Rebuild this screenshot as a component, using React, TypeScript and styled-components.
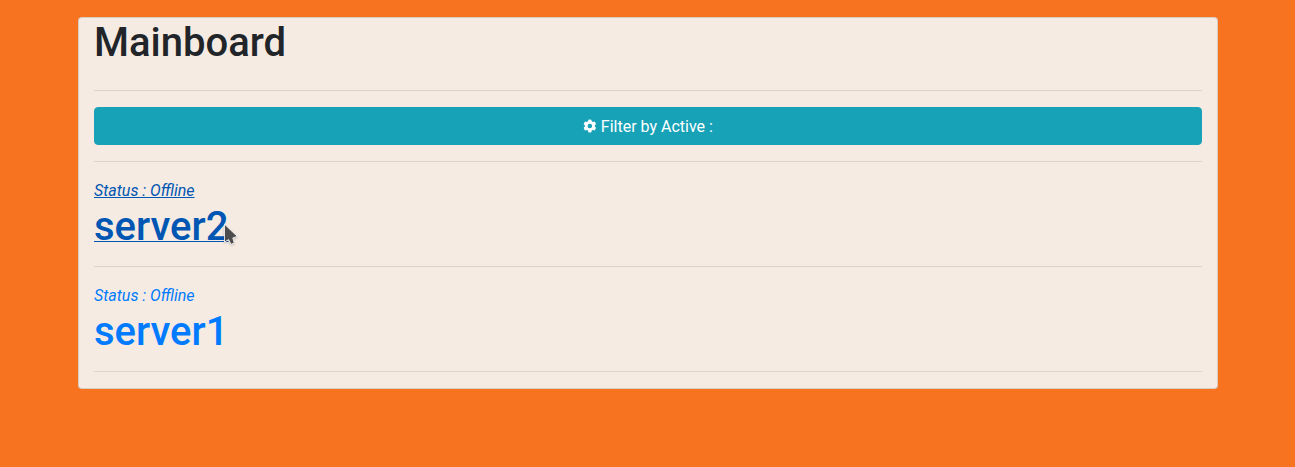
import React from "react";
import styled, { createGlobalStyle } from "styled-components";

const GlobalStyle = createGlobalStyle`
  *, *::before, *::after { box-sizing: border-box; }
  body {
    margin: 0;
    background: #f77320;
    color: #212529;
    font: 400 16px/1.5 Roboto, sans-serif;
  }
`;

const Page = styled.main`
  width: 1140px;
  margin: 0 auto 0 78px;
  padding-top: 17px;
`;

const Card = styled.section`
  display: flex;
  flex-direction: column;
  padding: 0 15px;
  background: #f5ebe2;
  border: 1px solid rgba(0, 0, 0, 0.125);
  border-radius: 4px;
`;

const Heading = styled.h1`
  height: 48px;
  margin: 0;
  padding-top: 1px;
  font-size: 40px;
  font-weight: 500;
  line-height: 48px;
`;

const Title = styled(Heading)`
  margin-bottom: 8px;
`;

const Divider = styled.hr`
  width: 100%;
  height: 1px;
  margin: 16px 0;
  border: 0;
  background: rgba(0, 0, 0, 0.1);
`;

const FilterButton = styled.button`
  height: 38px;
  padding: 7px 12px 5px;
  border: 1px solid #17a2b8;
  border-radius: 4px;
  background: #17a2b8;
  color: #fff;
  font: inherit;
  text-align: center;
`;

const Gear = styled.svg`
  width: 13.7px;
  height: 14px;
  vertical-align: -1px;
`;

const ServerLink = styled.a<{ $hovered?: boolean }>`
  position: relative;
  display: block;
  align-self: flex-start;
  color: ${(p) => (p.$hovered ? "#0056b3" : "#007bff")};
  text-decoration: ${(p) => (p.$hovered ? "underline 1px" : "none")};
  text-decoration-skip-ink: none;
`;

const Status = styled.em`
  display: block;
  height: 24px;
  padding-top: 1px;
`;

const Pointer = styled.svg`
  position: absolute;
  left: 129px;
  top: 45px;
  width: 16px;
  height: 24px;
  filter: drop-shadow(0 1px 1px rgba(0, 0, 0, 0.2));
`;

const servers = [
  { name: "server2", hovered: true },
  { name: "server1", hovered: false },
];

function GearIcon() {
  return (
    <Gear viewBox="0 0 14 14">
      <circle cx="7" cy="7" r="3.75" fill="none" stroke="#fff" strokeWidth="2.9" />
      {[0, 60, 120, 180, 240, 300].map((angle) => (
        <path
          key={angle}
          d="M5 3L5.5 .6Q7 .1 8.5 .6L9 3Z"
          fill="#fff"
          transform={`rotate(${angle} 7 7)`}
        />
      ))}
    </Gear>
  );
}

export default function App() {
  return (
    <>
      <GlobalStyle />
      <Page>
        <Card>
          <Title>Mainboard</Title>
          <Divider />
          <FilterButton>
            <GearIcon /> Filter by Active :
          </FilterButton>
          <Divider />
          {servers.map(({ name, hovered }) => (
            <React.Fragment key={name}>
              <ServerLink $hovered={hovered}>
                <Status>Status : Offline</Status>
                <Heading>{name}</Heading>
                {hovered && (
                  <Pointer viewBox="0 0 16 24">
                    <path
                      d="M1.5 1.2V19.2L5.6 16.6L8.1 21.4L11.2 19.8L9.8 14.9L14.3 13.4Z"
                      fill="#4d4d4d"
                      stroke="#fff"
                      strokeWidth="0.8"
                    />
                  </Pointer>
                )}
              </ServerLink>
              <Divider />
            </React.Fragment>
          ))}
        </Card>
      </Page>
    </>
  );
}
